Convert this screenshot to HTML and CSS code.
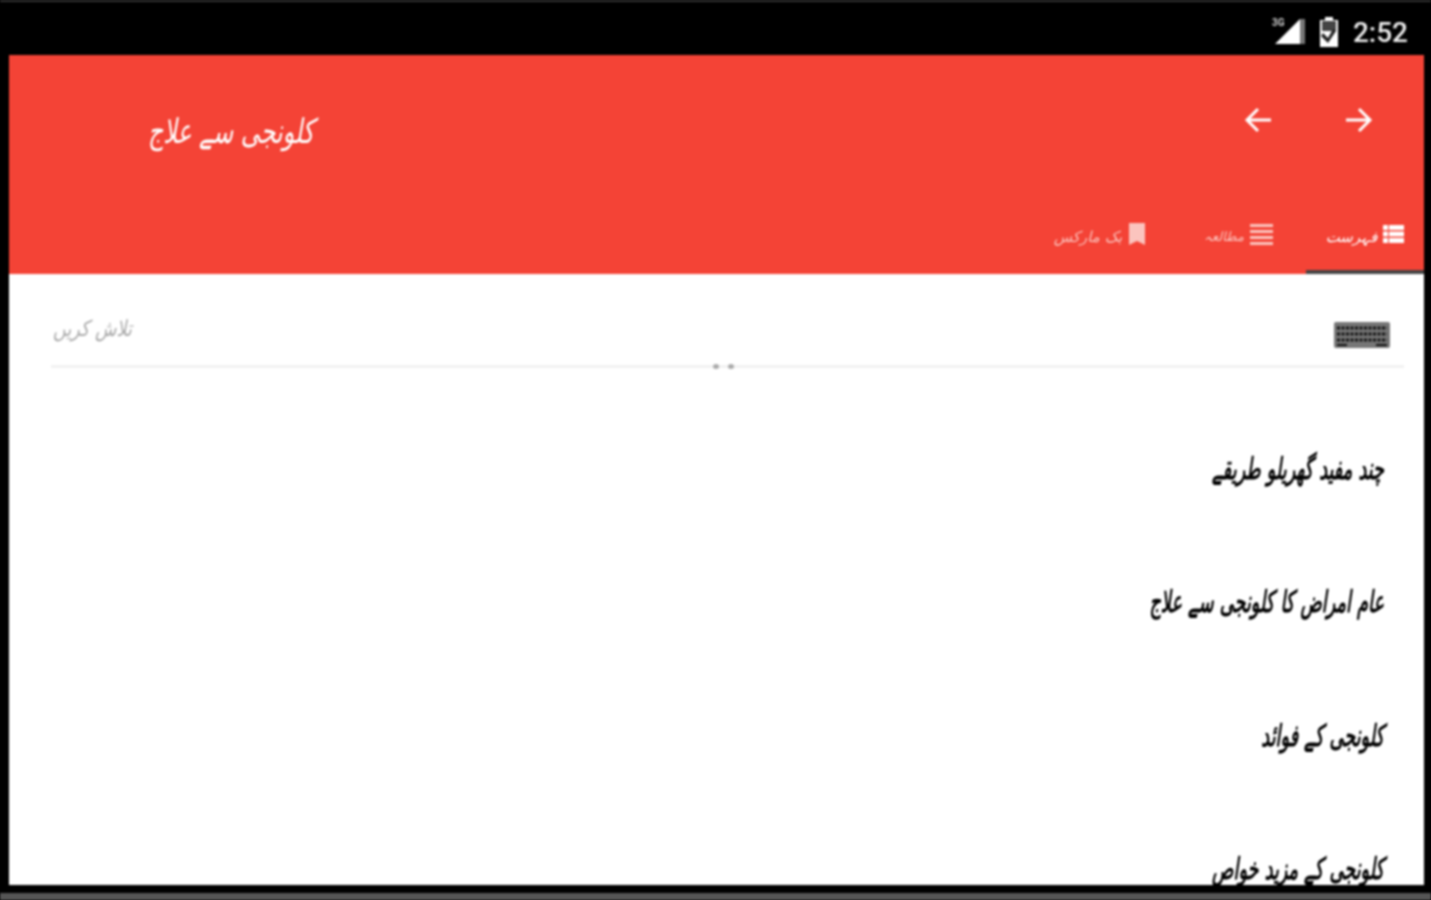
FILE: index.html
```html
<!DOCTYPE html>
<html lang="ur">
<head>
  <meta charset="UTF-8" />
  <title>کلونجی سے علاج</title>
  <meta name="viewport" content="width=device-width, initial-scale=1.0" />
  <link rel="stylesheet" href="styles.css">
</head>
<body>
  <div class="device">
    <div class="status-bar">
      <svg class="signal" width="36" height="32" viewBox="0 0 36 32">
        <text x="0" y="10" class="signal-label">3G</text>
        <path d="M28 3v25H3z" fill="#fff" />
        <path d="M28 3h5v25h-5z" fill="#777" />
      </svg>
      <svg class="battery" width="22" height="32" viewBox="0 0 22 32">
        <path d="M7 1h8v3h5v27H2V4h5z" fill="#fff" />
        <path d="M4 5h14v10H4z" fill="#444" />
        <path d="M5 17l5 5 5-9 3 2-8 12-7-7z" fill="#222" />
      </svg>
      <span class="clock">2:52</span>
    </div>

    <div class="screen">
      <header class="app-header">
        <div class="toolbar">
          <h1 class="app-title">کلونجی سے علاج</h1>
          <div class="nav-arrows">
            <svg width="30" height="30" viewBox="0 0 30 30">
              <path d="M27 15H4M14 4L3 15l11 11" class="arrow" />
            </svg>
            <svg width="30" height="30" viewBox="0 0 30 30">
              <path d="M3 15h23M16 4l11 11-11 11" class="arrow" />
            </svg>
          </div>
        </div>
        <nav class="tabs">
          <div class="tab tab-bookmarks">
            <span>بک مارکس</span>
            <svg width="18" height="22" viewBox="0 0 18 22">
              <path d="M1 0h16v22l-8-4-8 4z" fill="#fbc4be" />
            </svg>
          </div>
          <div class="tab tab-reading">
            <span>مطالعہ</span>
            <svg width="23" height="21" viewBox="0 0 23 21">
              <path d="M0 0h23v3H0zM0 6h23v3H0zM0 12h23v3H0zM0 18h23v3H0z" fill="#fbc4be" />
            </svg>
          </div>
          <div class="tab tab-active">
            <span>فہرست</span>
            <svg width="21" height="18" viewBox="0 0 21 18">
              <path d="M0 0h5v5H0zM6 0h15v5H6zM0 6.500h5v5H0zM6 6.500h15v5H6zM0 13h5v5H0zM6 13h15v5H6z" fill="#fff" />
            </svg>
          </div>
        </nav>
      </header>

      <main class="content">
        <div class="search-row">
          <span class="search-hint">تلاش کریں</span>
          <svg class="keyboard" width="56" height="26" viewBox="0 0 56 26">
            <rect width="56" height="26" rx="2" fill="#777" />
            <path d="M3 6h50M3 12h50M3 18h50" stroke="#111" stroke-width="3" stroke-dasharray="3 1.500" />
            <path d="M3 23h10M42 23h11" stroke="#111" stroke-width="2" />
          </svg>
        </div>
        <div class="search-line">
          <i class="handle-dot"></i><i class="handle-dot"></i>
        </div>
        <ul class="topic-list">
          <li>چند مفید گھریلو طریقے</li>
          <li>عام امراض کا کلونجی سے علاج</li>
          <li>کلونجی کے فوائد</li>
          <li>کلونجی کے مزید خواص</li>
        </ul>
      </main>
    </div>
    <div class="bottom-edge"></div>
  </div>
</body>
</html>
```

FILE: styles.css
```css
* {
  box-sizing: border-box;
}

html, body {
  margin: 0;
  height: 100%;
  overflow: hidden;
  background-color: #000;
}

body {
  font-family: "DejaVu Sans", "Noto Sans", sans-serif;
}

/* the reference is an upscaled capture, everything in it is soft */
.device {
  height: 900px;
  display: flex;
  flex-direction: column;
  border-top: 2px solid #333;
  filter: blur(0.8px);
}

.status-bar {
  height: 53px;
  flex: none;
  display: flex;
  align-items: center;
  justify-content: flex-end;
  padding: 7px 23px 0 0;
  color: #eee;
}

.signal {
  margin-right: 10px;
}

.signal-label {
  font-family: "Roboto", sans-serif;
  font-size: 10px;
  font-weight: 700;
  fill: #ccc;
}

.battery {
  margin-right: 13px;
}

.clock {
  font-family: "Roboto", sans-serif;
  font-size: 28px;
  font-weight: 500;
}

.screen {
  height: 830px;
  flex: none;
  margin: 0 7px 0 9px;
  background-color: #fff;
  overflow: hidden;
  display: flex;
  flex-direction: column;
}

.app-header {
  height: 219px;
  flex: none;
  background-color: #f44336;
  color: #fff;
  display: flex;
  flex-direction: column;
  justify-content: space-between;
}

.toolbar {
  display: flex;
  align-items: flex-start;
  justify-content: space-between;
  padding: 50px 51px 0 139px;
}

.app-title {
  margin: 0;
  font-size: 34px;
  font-weight: 400;
  font-style: italic;
  line-height: 52px;
  transform: scaleX(0.7);
  transform-origin: left center;
}

.nav-arrows {
  display: flex;
  gap: 69px;
}

.arrow {
  fill: none;
  stroke: #fff;
  stroke-width: 3;
}

.tabs {
  display: flex;
  justify-content: flex-end;
}

.tab {
  height: 76px;
  display: flex;
  align-items: center;
  justify-content: center;
  gap: 6px;
  color: #fbc4be;
  font-size: 15px;
  font-style: italic;
  border-bottom: 4px solid transparent;
}

.tab span {
  padding-top: 5px;
}

.tab svg {
  flex: none;
}

.tab-bookmarks {
  width: 142px;
}

.tab-reading {
  width: 135px;
  font-size: 13px;
}

.tab-active {
  width: 118px;
  color: #fff;
  border-bottom-color: #444;
}

.content {
  flex: 1;
  padding: 0 20px 0 42px;
}

.search-row {
  height: 91px;
  display: flex;
  align-items: center;
  justify-content: space-between;
  padding: 30px 14px 0 2px;
}

.search-hint {
  color: #aaa;
  font-size: 22px;
  font-style: italic;
  margin-top: -12px;
  transform: scaleX(0.8);
  transform-origin: left center;
}

.search-line {
  height: 3px;
  padding-right: 8px;
  background-color: #f2f2f2;
  display: flex;
  justify-content: center;
  align-items: center;
  gap: 9px;
}

.handle-dot {
  width: 6px;
  height: 5px;
  border-radius: 50%;
  background-color: #aaa;
}

.topic-list {
  list-style: none;
  margin: 71px 0 0 0;
  padding: 0 20px 0 0;
  direction: rtl;
}

.topic-list li {
  height: 133.400px;
  line-height: 60px;
  font-size: 30px;
  font-weight: 700;
  font-style: italic;
  color: #000;
  transform: scaleX(0.59);
  transform-origin: right center;
}

.bottom-edge {
  flex: 1;
  border-bottom: 7px solid #555;
}
```
